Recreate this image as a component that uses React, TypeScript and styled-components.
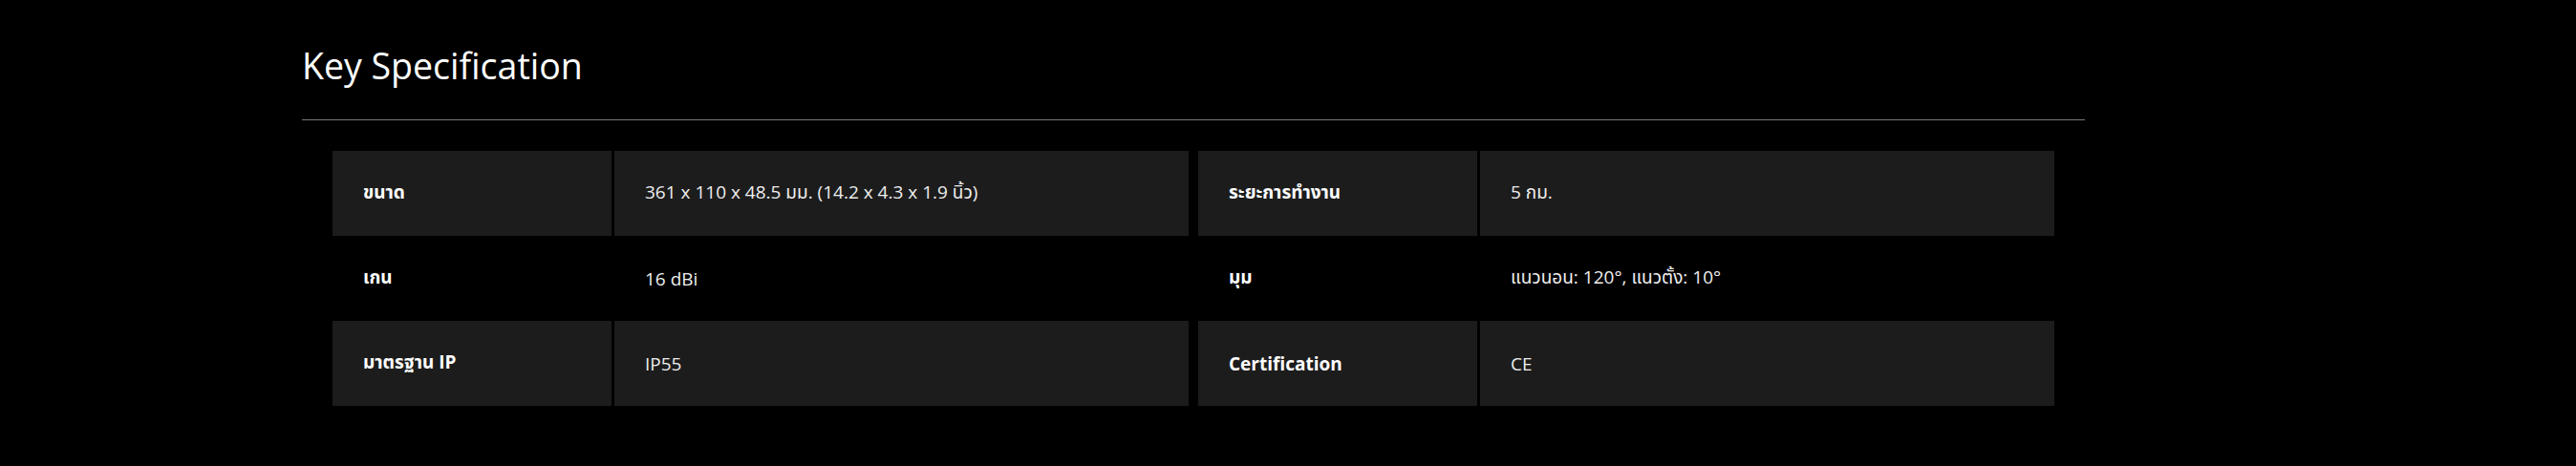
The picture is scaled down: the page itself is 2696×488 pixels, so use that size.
import styled, { createGlobalStyle } from 'styled-components';

const GlobalStyle = createGlobalStyle`
  html, body {
    margin: 0;
    padding: 0;
    background-color: #000;
  }

  body {
    font-family: 'Open Sans', 'Noto Sans', 'Noto Sans Thai', sans-serif;
    color: #fff;
  }
`;

const SpecSection = styled.section`
  width: 1866px;
  margin-left: 316px;
  padding-top: 47px;
`;

const SpecTitle = styled.h2`
  margin: 0;
  font-size: 37.5px;
  line-height: 44px;
  font-weight: 400;
  color: #fff;
  padding-bottom: 34px;
  border-bottom: 1px solid #777;
`;

const SpecTable = styled.div`
  display: flex;
  flex-direction: column;
  margin: 32px 32px 0 32px;
`;

const SpecRow = styled.div`
  display: flex;
  gap: 10px;
  height: 89px;
`;

const SpecPair = styled.div`
  flex: 1;
  display: grid;
  grid-template-columns: 292px 1fr;
  column-gap: 3px;
`;

const SpecCell = styled.div<{ $striped: boolean }>`
  display: flex;
  align-items: center;
  padding: 0 32px;
  font-size: 19px;
  background-color: ${({ $striped }) => ($striped ? '#1c1c1c' : 'transparent')};
`;

const SpecLabel = styled(SpecCell)`
  font-weight: 700;
  color: #fff;
`;

const SpecValue = styled(SpecCell)`
  font-weight: 400;
  color: #eee;
`;

const specRows = [
  [
    ['ขนาด', '361 x 110 x 48.5 มม. (14.2 x 4.3 x 1.9 นิ้ว)'],
    ['ระยะการทำงาน', '5 กม.'],
  ],
  [
    ['เกน', '16 dBi'],
    ['มุม', 'แนวนอน: 120°, แนวตั้ง: 10°'],
  ],
  [
    ['มาตรฐาน IP', 'IP55'],
    ['Certification', 'CE'],
  ],
];

const App = () => {
  return (
    <>
      <GlobalStyle />
      <SpecSection>
        <SpecTitle>Key Specification</SpecTitle>
        <SpecTable>
          {specRows.map((row, rowIndex) => (
            <SpecRow key={rowIndex}>
              {row.map(([label, value]) => (
                <SpecPair key={label}>
                  <SpecLabel $striped={rowIndex % 2 === 0}>{label}</SpecLabel>
                  <SpecValue $striped={rowIndex % 2 === 0}>{value}</SpecValue>
                </SpecPair>
              ))}
            </SpecRow>
          ))}
        </SpecTable>
      </SpecSection>
    </>
  );
};

export default App;
